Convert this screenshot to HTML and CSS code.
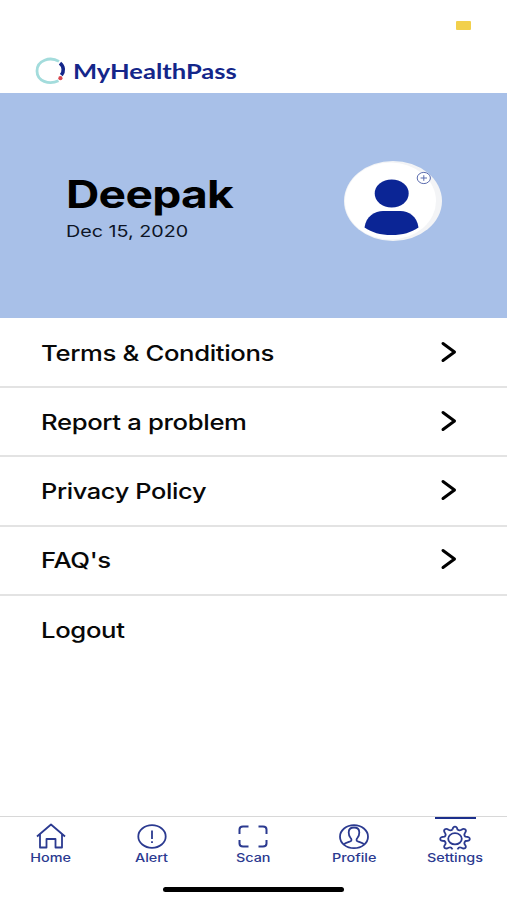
FILE: index.html
```
<!DOCTYPE html>
<html lang="en">

<head>
  <title>MyHealthPass</title>
  <meta charset="utf-8">
  <meta name="viewport" content="width=device-width, initial-scale=1">
  <link rel="stylesheet" href="styles.css">
</head>

<body>

  <header class="topbar">
    <div class="statusbar"><span class="battery"></span></div>
    <div class="brand">
      <svg class="brand-logo" width="32" height="28" viewBox="0 0 32 28" fill="none">
        <path d="M24 4.400C15-.8 2 3.200 2 14c0 10.200 12 14.200 21.500 9.800" stroke="#a3dcdc" stroke-width="2.800"/>
        <path d="M25 6.200c4 3.300 4.200 8.500 1.300 12" stroke="#14268a" stroke-width="3.600"/>
        <circle cx="25.400" cy="21.200" r="2.100" fill="#d9474f"/>
      </svg>
      <span class="brand-name">MyHealthPass</span>
    </div>
  </header>

  <section class="hero">
    <div class="user">
      <h1 class="user-name">Deepak</h1>
      <p class="user-date">Dec 15, 2020</p>
    </div>
    <svg class="avatar" width="98" height="80" viewBox="0 0 98 80">
      <ellipse cx="49" cy="40" rx="49" ry="40" fill="#f3f4f6"/>
      <ellipse cx="46.500" cy="40" rx="45.500" ry="38.500" fill="#fff"/>
      <ellipse cx="47.700" cy="32.500" rx="17" ry="14" fill="#0b2595"/>
      <path d="M20.500 66.500C22 55 31 50 39 50h17.500c8 0 16.500 5 18 16.500C67 71.500 59 74 47.500 74S28 71.500 20.500 66.500z" fill="#0b2595"/>
      <ellipse cx="79.800" cy="17" rx="6.600" ry="5.600" fill="#fff" stroke="#5b6cae" stroke-width="1"/>
      <path d="M76.600 17h6.400M79.800 14.200v5.600" stroke="#5b6cae" stroke-width="1"/>
    </svg>
  </section>

  <ul class="menu">
    <li class="menu-item"><span class="menu-text">Terms &amp; Conditions</span>
      <svg class="chevron" width="18" height="22" viewBox="0 0 18 22"><path d="M3 2.500l11.500 8.500L3 19.500"/></svg>
    </li>
    <li class="menu-item"><span class="menu-text">Report a problem</span>
      <svg class="chevron" width="18" height="22" viewBox="0 0 18 22"><path d="M3 2.500l11.500 8.500L3 19.500"/></svg>
    </li>
    <li class="menu-item"><span class="menu-text privacy">Privacy Policy</span>
      <svg class="chevron" width="18" height="22" viewBox="0 0 18 22"><path d="M3 2.500l11.500 8.500L3 19.500"/></svg>
    </li>
    <li class="menu-item"><span class="menu-text">FAQ's</span>
      <svg class="chevron" width="18" height="22" viewBox="0 0 18 22"><path d="M3 2.500l11.500 8.500L3 19.500"/></svg>
    </li>
    <li class="menu-item"><span class="menu-text">Logout</span></li>
  </ul>

  <nav class="tabs">
    <a class="tab">
      <svg class="tab-icon" width="34" height="28" viewBox="0 0 34 28">
        <path d="M3 14.500L17 2.500l14 12M6 12.500V25.500h6.500v-8.500h9v8.500H28V12.500"/>
      </svg>
      <span class="tab-text">Home</span>
    </a>
    <a class="tab">
      <svg class="tab-icon" width="34" height="28" viewBox="0 0 34 28">
        <ellipse cx="17" cy="14.500" rx="13.700" ry="11.300"/>
        <path d="M17 8.500V17M17 19.200V21"/>
      </svg>
      <span class="tab-text">Alert</span>
    </a>
    <a class="tab">
      <svg class="tab-icon thick" width="34" height="28" viewBox="0 0 34 28">
        <path d="M3.500 12V7.500q0-3 3.500-3h5.500M22.500 4.500H27q3.500 0 3.500 3V12M3.500 18v3.500q0 3 3.500 3h5.500M22.500 24.500H27q3.500 0 3.500-3V18"/>
      </svg>
      <span class="tab-text">Scan</span>
    </a>
    <a class="tab">
      <svg class="tab-icon" width="34" height="28" viewBox="0 0 34 28">
        <ellipse cx="17" cy="14.700" rx="14" ry="11.500"/>
        <path d="M6.800 22.500c1.500-2 4.700-2.200 6.700-3.200 1.500-.8 1-2.300.1-3.300-1.500-1.700-1.900-3.500-1.900-5.500 0-3.200 2.200-5 5.300-5s5.300 1.800 5.300 5c0 2-.4 3.800-1.900 5.500-.9 1-1.400 2.500.1 3.300 2 1 5.200 1.200 6.700 3.200"/>
      </svg>
      <span class="tab-text">Profile</span>
    </a>
    <a class="tab active">
      <svg class="tab-icon" width="34" height="28" viewBox="0 0 34 28">
        <ellipse cx="17" cy="16.800" rx="6.800" ry="5.600"/>
        <path d="M14.500 7.500Q15 4.700 17 4.700T19.500 7.500Q21.500 9 23.500 7.700 25.500 6.200 27 7.200 28.800 8.500 27 11 25.500 13 27.500 14.700 31.800 15 31.800 16.900T27.500 19Q25.500 21 27 22.800 28.700 25 27 26.200 25.500 27 23.500 25.800 21 24.500 19.500 27.300M14.500 27.300Q13 24.500 10.500 25.800 8.500 27 7 26.200 5.300 25 7 22.800 8.500 21 6.500 19 2.200 18.800 2.200 16.900T6.500 14.700Q8.500 13 7 11 5.200 8.500 7 7.200 8.500 6.200 10.500 7.700 12.500 9 14.500 7.500"/>
      </svg>
      <span class="tab-text">Settings</span>
    </a>
  </nav>

  <div class="home-bar"></div>

</body>

</html>
```

FILE: styles.css
```
* {
  box-sizing: border-box;
  margin: 0;
  padding: 0;
}

body {
  display: flex;
  flex-direction: column;
  height: 900px;
  background-color: #fff;
  color: #080808;
  font-family: Inter, Arial, sans-serif;
  overflow: hidden;
}

/* Status bar and logo */
.topbar {
  height: 93px;
}

.statusbar {
  display: flex;
  justify-content: flex-end;
  height: 57px;
  padding: 21px 36px 0 0;
}

.battery {
  width: 15px;
  height: 9px;
  background-color: #f2d04c;
  border-radius: 1px;
}

.brand {
  display: flex;
  align-items: center;
  height: 28px;
  padding-left: 35px;
  gap: 6px;
}

.brand-name {
  color: #14268a;
  font-family: Lato, sans-serif;
  font-size: 20.5px;
  font-weight: 700;
  line-height: 30px;
  transform: scaleX(1.245);
  transform-origin: left;
}

/* Blue user panel */
.hero {
  display: flex;
  justify-content: space-between;
  height: 225px;
  padding: 68px 65px 0 66px;
  background-color: #a8c0e8;
}

.user-name {
  font-size: 38px;
  font-weight: 700;
  line-height: 46px;
  letter-spacing: -0.6px;
  margin-top: 10px;
  color: #000;
  transform: scaleX(1.215);
  transform-origin: left;
}

.user-date {
  font-size: 16.5px;
  line-height: 20px;
  margin-top: 4px;
  color: #0d1526;
  transform: scaleX(1.195);
  transform-origin: left;
}

/* Menu rows */
.menu {
  flex: 1;
  padding-top: 1px;
  list-style-type: none;
}

.menu-item {
  display: flex;
  align-items: center;
  justify-content: space-between;
  height: 69.2px;
  padding: 0 49px 0 41px;
  border-bottom: 2px solid #e3e3e3;
}

.menu-item:last-child {
  height: 68px;
  border-bottom: none;
}

.menu-text {
  font-size: 21.5px;
  font-weight: 550;
  letter-spacing: -0.3px;
  transform: scaleX(1.195);
  transform-origin: left;
}

.privacy {
  transform: scaleX(1.18);
}

.chevron {
  fill: none;
  stroke: #000;
  stroke-width: 3;
  stroke-linecap: round;
  stroke-linejoin: round;
  margin-top: -2px;
}

/* Bottom tabs */
.tabs {
  display: flex;
  height: 71px;
  border-top: 1px solid #d8d8d8;
}

.tab {
  display: flex;
  flex-direction: column;
  align-items: center;
  width: 101.2px;
  padding-top: 5px;
  color: #2b3a90;
}

.tab-icon {
  fill: none;
  stroke: #2b3a90;
  stroke-width: 1.8;
  stroke-linejoin: round;
}

.thick {
  stroke-width: 2;
}

.tab-text {
  font-size: 11.8px;
  font-weight: 500;
  line-height: 16px;
  transform: scaleX(1.22);
}

/* Line over the selected tab */
.active::before {
  content: "";
  width: 41px;
  height: 2px;
  margin: -5px 0 3px;
  background-color: #1c2f8c;
}

.home-bar {
  width: 181px;
  height: 5px;
  margin: 0 auto 8px;
  border-radius: 3px;
  background-color: #000;
}
```
